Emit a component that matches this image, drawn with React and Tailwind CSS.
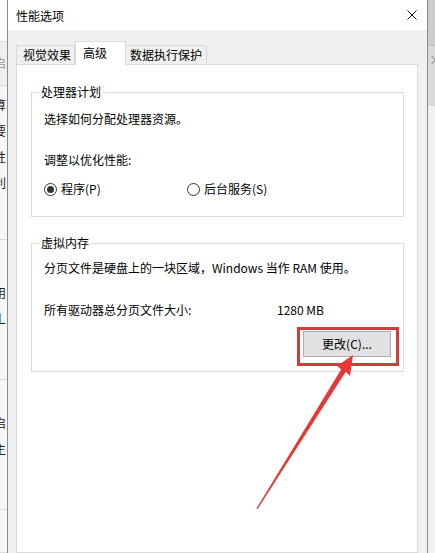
import React from "react";

const FONT = { fontFamily: '"Microsoft YaHei UI", "Noto Sans CJK SC", "Noto Sans", sans-serif' };

const BG_ROWS = [
  { h: "h-[42px]", bg: "bg-[#fbfbfb]", ch: "(", cls: "pt-[8px] text-[#888]" },
  { h: "h-[44px]", bg: "bg-[#efefef]", ch: "启", cls: "pt-[12px] text-[#999]" },
  { h: "h-[154px]", bg: "bg-[#f7f7f7]", ch: "算要性利", cls: "pt-[6px] text-[#222] leading-[26px]" },
  { h: "h-[140px]", bg: "bg-[#f7f7f7]", ch: "用丄", cls: "pt-[40px] text-[#222] leading-[26px]" },
  { h: "h-[130px]", bg: "bg-[#f7f7f7]", ch: "启主", cls: "pt-[30px] text-[#222] leading-[26px]" },
  { h: "h-[43px]", bg: "bg-[#f7f7f7]", ch: "", cls: "" },
];

function LeftStrip() {
  return (
    <div className="w-[7px] shrink-0 overflow-hidden flex flex-col">
      {BG_ROWS.map((r, i) => (
        <div key={i} className={`${r.h} ${r.bg} border-b border-[#dcdcdc] ${r.cls} text-[12px]`}>
          <div className="-ml-[6px] w-[14px] flex flex-col">
            {r.ch.split("").map((c, j) => (
              <span key={j}>{c}</span>
            ))}
          </div>
        </div>
      ))}
    </div>
  );
}

function RightStrip() {
  return (
    <div className="w-[7px] shrink-0 flex flex-col overflow-hidden">
      <div className="h-[46px] bg-[#cdcdcd] border-b border-[#bdbdbd]" />
      <div className="h-[60px] bg-[#dadada] text-[13px] text-[#888] leading-none pt-[6px] pl-[1px]">×</div>
      <div className="flex-1 bg-[#f1f1f1]" />
    </div>
  );
}

function Radio({ checked, label, className = "" }) {
  return (
    <div className={`flex items-center h-[18px] ${className}`}>
      <span className="w-[13px] h-[13px] rounded-full border border-[#333] bg-white flex items-center justify-center">
        {checked && <span className="w-[7px] h-[7px] rounded-full bg-[#333]" />}
      </span>
      <span className="ml-[4px]">{label}</span>
    </div>
  );
}

function Group({ title, children, className = "" }) {
  return (
    <div className={`relative border border-[#dcdcdc] pl-[12px] pr-[12px] ${className}`}>
      <span className="absolute -top-[10px] left-[7px] bg-white px-[2px] leading-[18px]">{title}</span>
      {children}
    </div>
  );
}

export default function App() {
  return (
    <div className="relative w-[435px] h-[553px] flex overflow-hidden bg-white text-[12px] text-black" style={FONT}>
      <LeftStrip />

      <div className="flex-1 flex flex-col border-x border-[#8c8c8c]">
        <div className="h-[30px] bg-white flex items-center justify-between pl-[8px] pr-[10px]">
          <span className="leading-[18px] pt-[1px]">性能选项</span>
          <svg width="10" height="10" viewBox="0 0 10 10">
            <path d="M0.5 0.5 L9.5 9.5 M9.5 0.5 L0.5 9.5" stroke="#111" strokeWidth="1" />
          </svg>
        </div>

        <div className="flex-1 flex flex-col bg-[#f0f0f0] pl-[8px] pr-[9px] pt-[11px]">
          <div className="flex items-end h-[23px]">
            <div className="w-[59px] h-[19px] border border-b-0 border-[#d9d9d9] bg-[#f0f0f0] flex items-center pl-[6px] leading-[18px]">
              视觉效果
            </div>
            <div className="relative z-10 w-[51px] h-[24px] -mb-px border border-b-0 border-[#d9d9d9] bg-white pl-[7px] pt-[2px] leading-[18px]">
              高级
            </div>
            <div className="w-[81px] h-[19px] border border-b-0 border-l-0 border-[#d9d9d9] bg-[#f0f0f0] flex items-center pl-[4px] leading-[18px]">
              数据执行保护
            </div>
          </div>

          <div className="flex-1 bg-white border border-[#d9d9d9] pl-[14px] pr-[13px] pt-[27px]">
            <Group title="处理器计划" className="pt-[17px] pb-[18px]">
              <p className="leading-[18px]">选择如何分配处理器资源。</p>
              <p className="leading-[18px] mt-[23px]">调整以优化性能:</p>
              <div className="flex mt-[11px]">
                <Radio checked label="程序(P)" className="w-[143px]" />
                <Radio label="后台服务(S)" />
              </div>
            </Group>

            <Group title="虚拟内存" className="mt-[26px] pt-[15px] pb-[14px]">
              <p className="leading-[18px]">分页文件是硬盘上的一块区域，Windows 当作 RAM 使用。</p>
              <div className="flex leading-[18px] mt-[24px]">
                <span className="w-[233px]">所有驱动器总分页文件大小:</span>
                <span>1280 MB</span>
              </div>
              <div className="flex justify-end mt-[12px]">
                <div className="relative">
                  <button className="w-[88px] h-[26px] bg-[#e1e1e1] border border-[#adadad] leading-[18px]">
                    更改(C)...
                  </button>
                  <div className="absolute -left-[6px] -top-[4px] -right-[8px] -bottom-[9px] border-[3px] border-[#d23c3c]" />
                </div>
              </div>
            </Group>
          </div>
        </div>
      </div>

      <RightStrip />

      <svg className="absolute inset-0 pointer-events-none" width="435" height="553" viewBox="0 0 435 553">
        <polygon
          points="353,355 350,376 345.8,371.8 257.6,509 256.4,508.5 341.2,369.2 337,366"
          fill="#e53935"
        />
      </svg>
    </div>
  );
}
